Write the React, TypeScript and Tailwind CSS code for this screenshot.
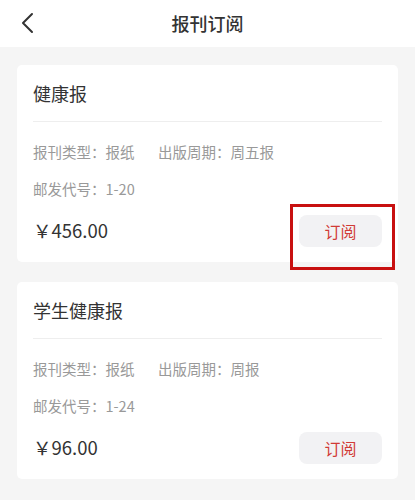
import React from 'react';

type Paper = {
  name: string;
  kind: string;
  cycle: string;
  code: string;
  price: string;
  marked?: boolean;
};

const papers: Paper[] = [
  { name: '健康报', kind: '报纸', cycle: '周五报', code: '1-20', price: '456.00', marked: true },
  { name: '学生健康报', kind: '报纸', cycle: '周报', code: '1-24', price: '96.00' },
];

const PaperCard = ({ paper }: { paper: Paper }) => (
  <div className="relative bg-white rounded-[5px] px-4 pb-[15px]">
    <div className="h-[56px] flex items-center text-[18px] text-[#333333]">{paper.name}</div>
    <div className="h-px bg-[#eeeeee]" />
    <div className="pt-[11px] text-[14.5px] text-[#999999]">
      <div className="h-[37px] flex items-center">
        <span className="w-[125px]">报刊类型：{paper.kind}</span>
        <span>出版周期：{paper.cycle}</span>
      </div>
      <div className="h-[37px] flex items-center">邮发代号：{paper.code}</div>
    </div>
    <div className="mt-2 h-8 flex items-center justify-between">
      <span className="text-[18.5px] text-[#333333]">￥{paper.price}</span>
      <button className="w-[83px] h-8 rounded-lg bg-[#f2f2f4] text-[16px] text-[#d13b36]">订阅</button>
    </div>
    {/* highlight box round the first button */}
    {paper.marked && (
      <div className="absolute left-[273px] top-[139px] w-[105px] h-[66px] border-[3px] border-[#c81010]" />
    )}
  </div>
);

export default function App() {
  return (
    <div
      className="min-h-screen bg-[#f5f5f5]"
      style={{ fontFamily: '"Noto Sans CJK SC", "Noto Sans", sans-serif' }}
    >
      {/* Header */}
      <div className="relative h-[47px] bg-white flex items-center justify-center">
        <svg
          className="absolute left-[19px] top-[12px]"
          width="18"
          height="22"
          viewBox="0 0 18 22"
          fill="none"
          stroke="#333333"
          strokeWidth="2"
          strokeLinecap="round"
          strokeLinejoin="round"
        >
          <path d="M13 2 L4 11 L13 20" />
        </svg>
        <h1 className="text-[18px] font-medium text-[#333333]">报刊订阅</h1>
      </div>

      <div className="px-[17px] pt-[18px] pb-5 flex flex-col gap-5">
        {papers.map((p) => (
          <PaperCard key={p.name} paper={p} />
        ))}
      </div>
    </div>
  );
}
